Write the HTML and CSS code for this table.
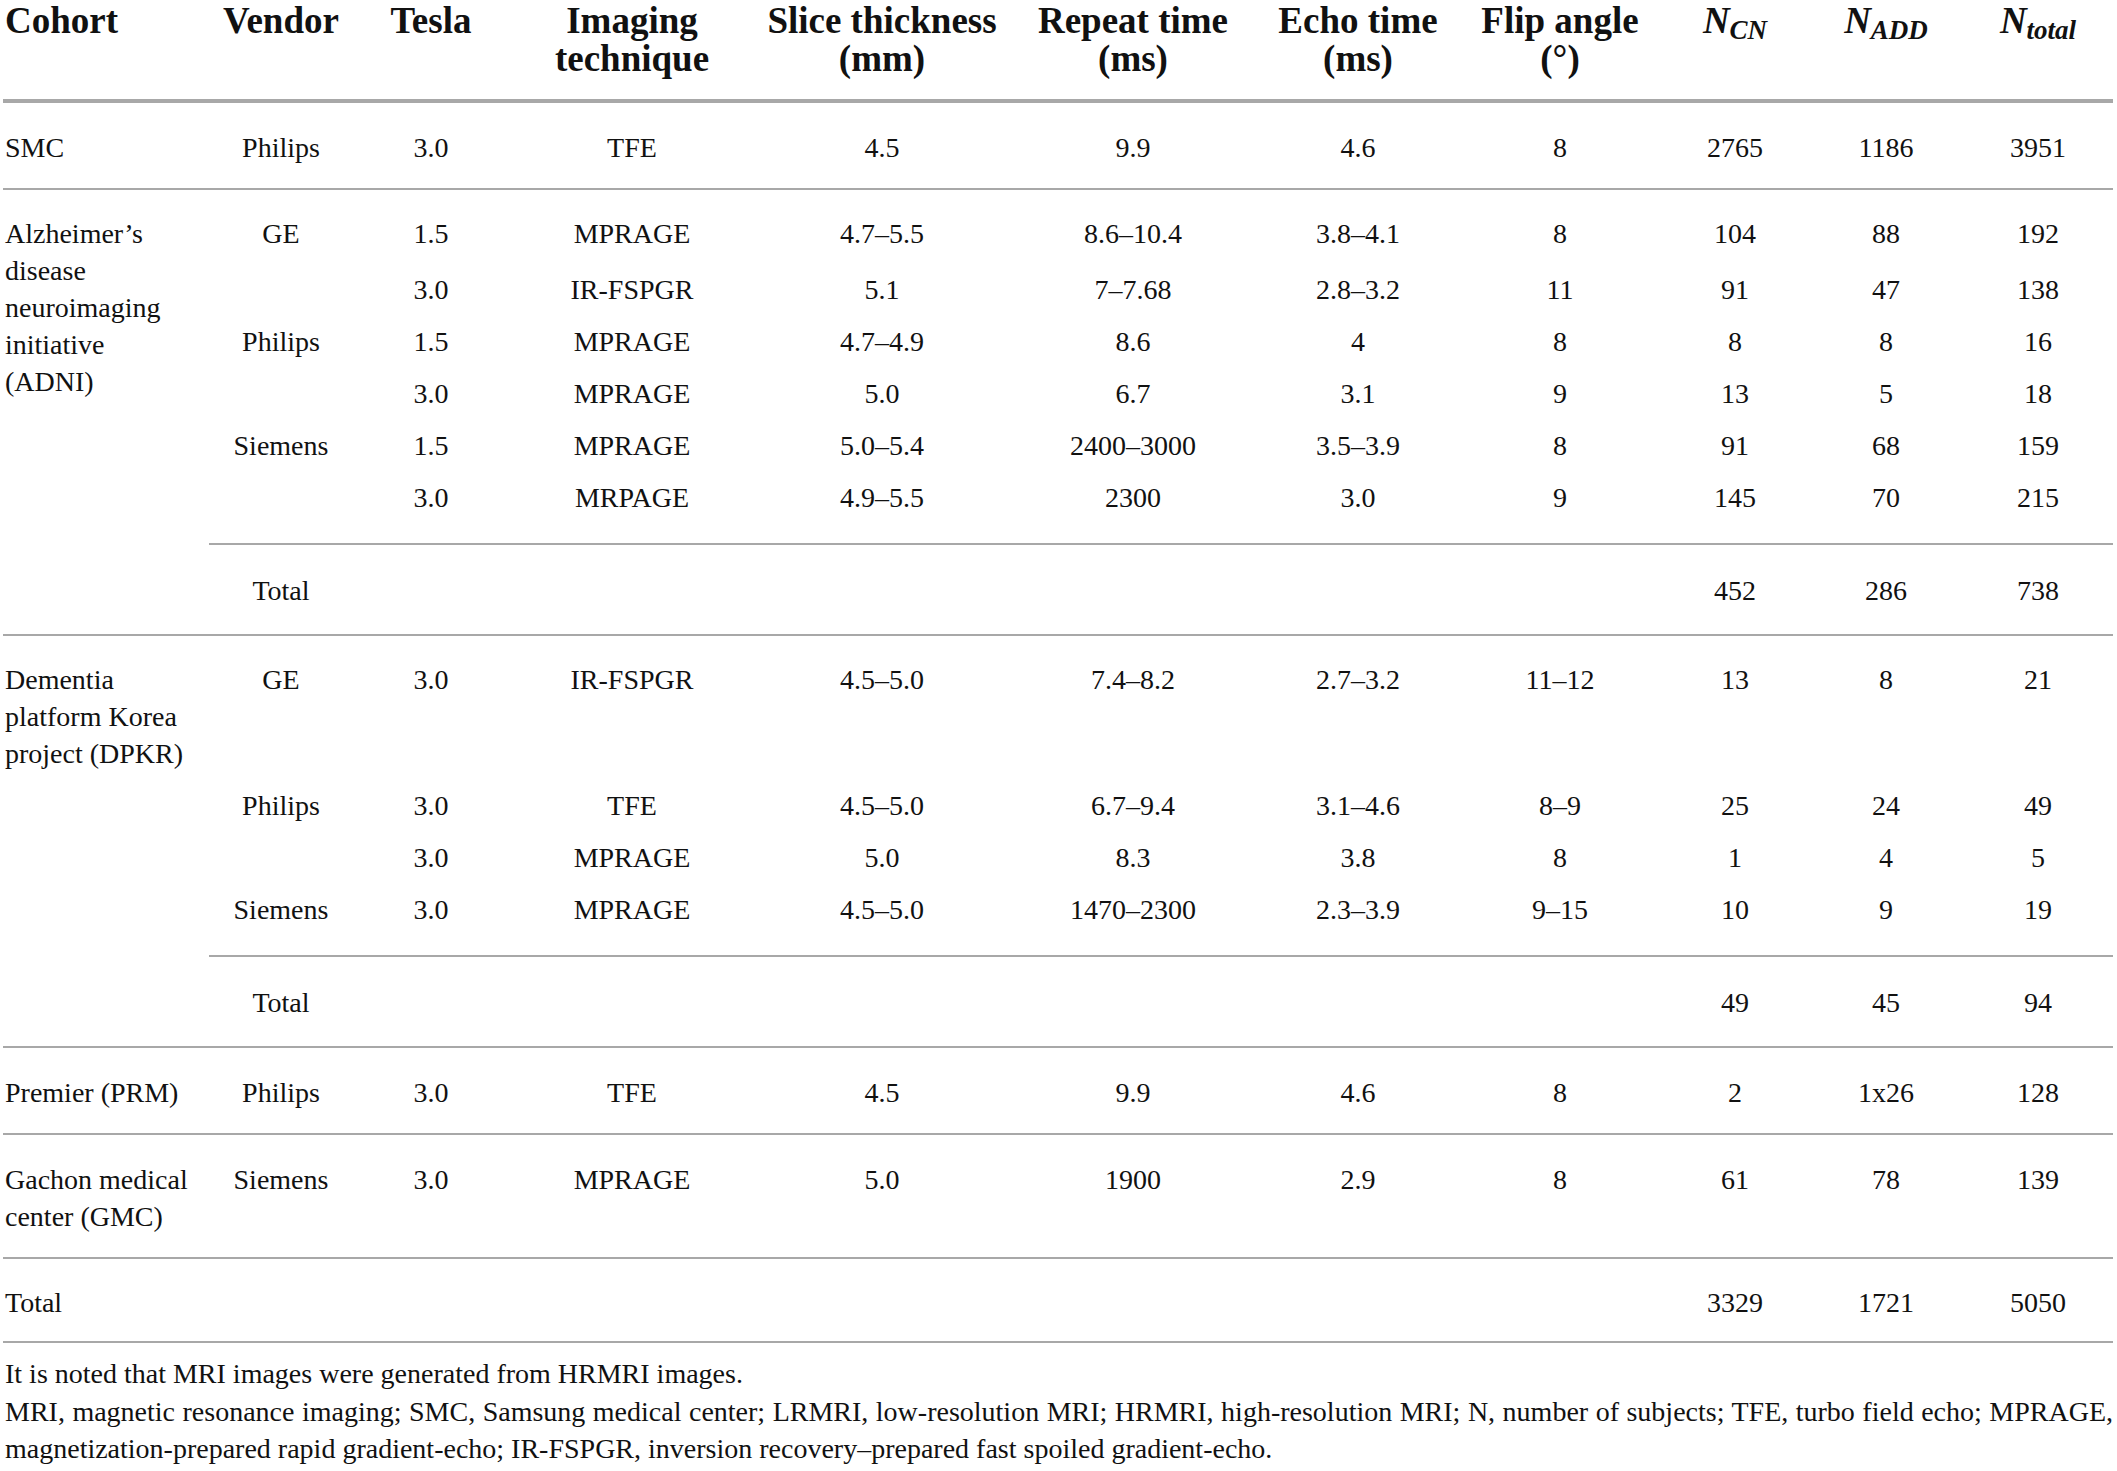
FILE: index.html
```html
<!DOCTYPE html>
<html lang="en">
<head>
<meta charset="utf-8">
<title>Cohort MRI acquisition table</title>
<link rel="stylesheet" href="styles.css">
</head>
<body>
<div class="page">
<table class="data">
<colgroup>
<col class="c-cohort"><col class="c-vendor"><col class="c-tesla"><col class="c-tech"><col class="c-slice"><col class="c-repeat"><col class="c-echo"><col class="c-flip"><col class="c-ncn"><col class="c-nadd"><col class="c-ntot">
</colgroup>
<thead>
<tr>
<th class="left">Cohort</th>
<th>Vendor</th>
<th>Tesla</th>
<th>Imaging<br>technique</th>
<th>Slice thickness<br>(mm)</th>
<th>Repeat time<br>(ms)</th>
<th>Echo time<br>(ms)</th>
<th>Flip angle<br>(°)</th>
<th class="n">N<sub>CN</sub></th>
<th class="n">N<sub>ADD</sub></th>
<th class="n">N<sub>total</sub></th>
</tr>
</thead>
<tbody>
<tr class="sep single">
<td class="left">SMC</td><td>Philips</td><td>3.0</td><td>TFE</td><td>4.5</td><td>9.9</td><td>4.6</td><td>8</td><td>2765</td><td>1186</td><td>3951</td>
</tr>

<tr class="sep top loose">
<td class="left" rowspan="7">Alzheimer’s<br>disease<br>neuroimaging<br>initiative<br>(ADNI)</td>
<td>GE</td><td>1.5</td><td>MPRAGE</td><td>4.7–5.5</td><td>8.6–10.4</td><td>3.8–4.1</td><td>8</td><td>104</td><td>88</td><td>192</td>
</tr>
<tr>
<td></td><td>3.0</td><td>IR-FSPGR</td><td>5.1</td><td>7–7.68</td><td>2.8–3.2</td><td>11</td><td>91</td><td>47</td><td>138</td>
</tr>
<tr>
<td>Philips</td><td>1.5</td><td>MPRAGE</td><td>4.7–4.9</td><td>8.6</td><td>4</td><td>8</td><td>8</td><td>8</td><td>16</td>
</tr>
<tr>
<td></td><td>3.0</td><td>MPRAGE</td><td>5.0</td><td>6.7</td><td>3.1</td><td>9</td><td>13</td><td>5</td><td>18</td>
</tr>
<tr>
<td>Siemens</td><td>1.5</td><td>MPRAGE</td><td>5.0–5.4</td><td>2400–3000</td><td>3.5–3.9</td><td>8</td><td>91</td><td>68</td><td>159</td>
</tr>
<tr class="end">
<td></td><td>3.0</td><td>MRPAGE</td><td>4.9–5.5</td><td>2300</td><td>3.0</td><td>9</td><td>145</td><td>70</td><td>215</td>
</tr>
<tr class="subtotal">
<td>Total</td><td></td><td></td><td></td><td></td><td></td><td></td><td>452</td><td>286</td><td>738</td>
</tr>

<tr class="sep top">
<td class="left">Dementia<br>platform Korea<br>project (DPKR)</td>
<td>GE</td><td>3.0</td><td>IR-FSPGR</td><td>4.5–5.0</td><td>7.4–8.2</td><td>2.7–3.2</td><td>11–12</td><td>13</td><td>8</td><td>21</td>
</tr>
<tr>
<td></td><td>Philips</td><td>3.0</td><td>TFE</td><td>4.5–5.0</td><td>6.7–9.4</td><td>3.1–4.6</td><td>8–9</td><td>25</td><td>24</td><td>49</td>
</tr>
<tr>
<td></td><td></td><td>3.0</td><td>MPRAGE</td><td>5.0</td><td>8.3</td><td>3.8</td><td>8</td><td>1</td><td>4</td><td>5</td>
</tr>
<tr class="end">
<td></td><td>Siemens</td><td>3.0</td><td>MPRAGE</td><td>4.5–5.0</td><td>1470–2300</td><td>2.3–3.9</td><td>9–15</td><td>10</td><td>9</td><td>19</td>
</tr>
<tr class="subtotal">
<td class="gap"></td><td>Total</td><td></td><td></td><td></td><td></td><td></td><td></td><td>49</td><td>45</td><td>94</td>
</tr>

<tr class="sep single">
<td class="left">Premier (PRM)</td><td>Philips</td><td>3.0</td><td>TFE</td><td>4.5</td><td>9.9</td><td>4.6</td><td>8</td><td>2</td><td>1x26</td><td>128</td>
</tr>

<tr class="sep single">
<td class="left">Gachon medical<br>center (GMC)</td><td>Siemens</td><td>3.0</td><td>MPRAGE</td><td>5.0</td><td>1900</td><td>2.9</td><td>8</td><td>61</td><td>78</td><td>139</td>
</tr>

<tr class="sep grand">
<td class="left">Total</td><td></td><td></td><td></td><td></td><td></td><td></td><td></td><td>3329</td><td>1721</td><td>5050</td>
</tr>
</tbody>
</table>

<div class="notes">
<p class="note">It is noted that MRI images were generated from HRMRI images.</p>
<p class="note legend"><span class="legend-line">MRI, magnetic resonance imaging; SMC, Samsung medical center; LRMRI, low-resolution MRI; HRMRI, high-resolution MRI; N, number of subjects; TFE, turbo field echo; MPRAGE,</span><span class="legend-line last">magnetization-prepared rapid gradient-echo; IR-FSPGR, inversion recovery–prepared fast spoiled gradient-echo.</span></p>
</div>
</div>
</body>
</html>
```

FILE: styles.css
```css
html, body {
  margin: 0;
  padding: 0;
  background: #ffffff;
}

body {
  color: #111111;
  font-family: "Liberation Serif", "Times New Roman", serif;
}

.page {
  padding: 0 4px 0 3px;
  width: 2110px;
}

.data {
  width: 2110px;
  table-layout: fixed;
  border-collapse: separate;
  border-spacing: 0;
  font-size: 28px;
  line-height: 37px;
}

.c-cohort { width: 206px; }
.c-vendor { width: 144px; }
.c-tesla { width: 156px; }
.c-tech { width: 246px; }
.c-slice { width: 254px; }
.c-repeat { width: 248px; }
.c-echo { width: 202px; }
.c-flip { width: 202px; }
.c-ncn { width: 148px; }
.c-nadd { width: 154px; }
.c-ntot { width: 150px; }

.data th {
  font-size: 37px;
  line-height: 38px;
  font-weight: bold;
  text-align: center;
  vertical-align: top;
  white-space: nowrap;
  padding: 2px 0 21px;
  border-bottom: 2px solid #a8a8a8;
}

.data th.n {
  font-style: italic;
}

.data th sub {
  font-size: 27px;
  line-height: 0;
  vertical-align: -6px;
}

.data td {
  text-align: center;
  vertical-align: top;
  white-space: nowrap;
  padding: 7px 0 8px;
}

.data .left {
  text-align: left;
  padding-left: 2px;
}

.data tr.sep > td {
  border-top: 2px solid #a8a8a8;
}

.data tr.single > td {
  padding-top: 26px;
  padding-bottom: 22px;
}

.data tr.top > td {
  padding-top: 25px;
}

.data tr.loose > td {
  padding-bottom: 12px;
}

.data tr.end > td {
  padding-bottom: 27px;
}

.data tr.subtotal > td {
  border-top: 2px solid #a8a8a8;
  padding-top: 27px;
  padding-bottom: 25px;
}

.data tr.subtotal > td.gap {
  border-top: 0;
}

.data tr.grand > td {
  padding-top: 25px;
  padding-bottom: 20px;
  border-bottom: 2px solid #a8a8a8;
}

.notes {
  padding-left: 2px;
  padding-top: 12px;
}

.note {
  margin: 0;
  font-size: 28px;
  line-height: 37.5px;
}

.legend-line {
  display: block;
  text-align: justify;
  text-align-last: justify;
}

.legend-line.last {
  text-align: left;
  text-align-last: left;
}
```
